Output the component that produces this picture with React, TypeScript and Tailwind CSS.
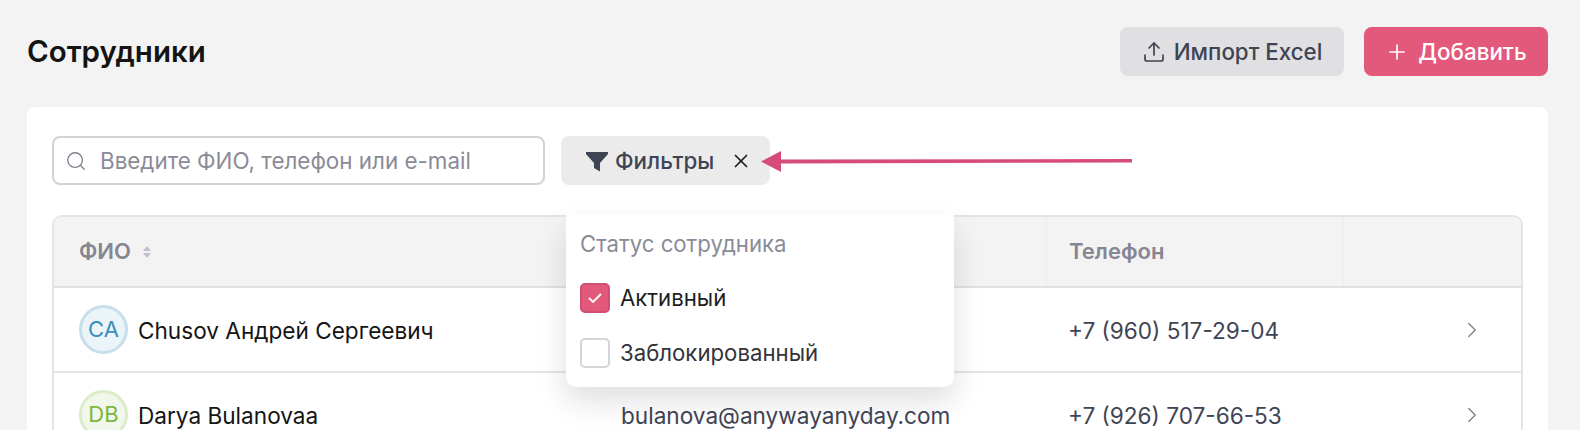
import { ChevronRight, Plus, Search, Upload, X } from "lucide-react";

const rows = [
  {
    initials: "CA",
    name: "Chusov Андрей Сергеевич",
    email: "",
    phone: "+7 (960) 517-29-04",
    avatar: "bg-[#ebf4f8] border-[#c6dfeb] text-[#3b8fb9]",
  },
  {
    initials: "DB",
    name: "Darya Bulanovaa",
    email: "bulanova@anywayanyday.com",
    phone: "+7 (926) 707-66-53",
    avatar: "bg-[#f2f7ec] border-[#dcebca] text-[#7db53c]",
  },
];

const columns = "grid grid-cols-[567px_424px_297px_1fr]";

function Checkbox({ checked }: { checked?: boolean }) {
  if (checked) {
    return (
      <span className="flex h-[30px] w-[30px] items-center justify-center rounded-[5px] border-2 border-[#cf4f70] bg-[#e3597b]">
        <svg width="16" height="12" viewBox="0 0 16 12" fill="none" stroke="white" strokeWidth="1.8">
          <path d="M2 6l4 4 8-8" />
        </svg>
      </span>
    );
  }
  return <span className="h-[30px] w-[30px] rounded-[5px] border-2 border-[#d4d4da] bg-white" />;
}

export default function App() {
  return (
    <div className="h-[430px] w-[1580px] overflow-hidden bg-[#f3f3f3] font-['Inter',sans-serif]">
      <header className="flex items-center justify-between pl-[27px] pr-[32px] pt-[27px]">
        <h1 className="text-[29.500px] font-semibold text-[#141414]">Сотрудники</h1>
        <div className="flex gap-5">
          <button className="flex h-[49px] w-[224px] items-center justify-center gap-[8px] rounded-lg bg-[#e0e0e3] text-[22.300px] font-[450] text-[#3f4454]">
            <Upload size={24} strokeWidth={1.7} />
            Импорт Excel
          </button>
          <button className="flex h-[49px] w-[184px] items-center justify-center gap-[9px] rounded-lg bg-[#e3597b] text-[22.400px] font-[450] text-white">
            <Plus size={24} strokeWidth={1.7} />
            Добавить
          </button>
        </div>
      </header>

      <main className="relative ml-[27px] mr-[32px] mt-[31px] h-[400px] rounded-t-lg bg-white px-[25px] pt-[29px]">
        <div className="flex gap-4">
          <div className="flex h-[49px] w-[493px] items-center gap-[13px] rounded-lg border-2 border-[#d2d2d8] bg-white pl-[11px]">
            <Search size={22} strokeWidth={1.5} className="text-[#82828e]" />
            <span className="text-[22.400px] text-[#8b8b97]">Введите ФИО, телефон или e-mail</span>
          </div>
          <button className="flex h-[49px] w-[209px] items-center gap-[6px] rounded-lg bg-[#ebebeb] pl-6 text-[22.400px] font-[450] text-[#3f4454]">
            <svg width="24" height="24" viewBox="0 0 24 24" fill="#3f4454">
              <path d="M1 3h22v2l-8 9v8.500l-6-3.500v-5L1 5z" />
            </svg>
            Фильтры
            <X size={22} strokeWidth={1.8} className="ml-[10px] text-[#1a1a1a]" />
          </button>
        </div>

        <div className="mt-[30px] rounded-t-[10px] border-2 border-b-0 border-[#e4e4e7]">
          <div className={`${columns} h-[71px] items-center rounded-t-[8px] border-b-2 border-[#e0e0e3] bg-[#f3f3f3] text-[22px] font-semibold text-[#868692]`}>
            <div className="flex items-center gap-[12px] pl-[25px]">
              ФИО
              <svg width="8" height="12" viewBox="0 0 8 12" fill="#c0c0cc">
                <path d="M4 0l4 5H0zM0 7h8l-4 5z" />
              </svg>
            </div>
            <div />
            <div className="flex h-full items-center border-l-2 border-[#efefef] pl-[22px]">Телефон</div>
            <div className="h-full border-l-2 border-[#efefef]" />
          </div>
          {rows.map((row) => (
            <div key={row.initials} className={`${columns} h-[85px] items-center border-b-2 border-[#e4e4e7] text-[22.600px]`}>
              <div className="flex items-center gap-[10px] pl-[25px] text-[#141414]">
                <span className={`flex h-[49px] w-[49px] items-center justify-center rounded-full border-[3px] text-[22px] ${row.avatar}`}>
                  {row.initials}
                </span>
                <span className="pt-[2px]">{row.name}</span>
              </div>
              <div className="pt-[2px] text-[#3f4454]">{row.email}</div>
              <div className="pl-[23px] pt-[2px] text-[#3f4454]">{row.phone}</div>
              <div className="flex justify-end pr-[36px]">
                <ChevronRight size={26} strokeWidth={1.3} className="text-[#82828e]" />
              </div>
            </div>
          ))}
        </div>

        {/* filter popup */}
        <div className="absolute left-[539px] top-[108px] h-[172px] w-[388px] rounded-b-[10px] bg-white px-[14px] pt-[14px] shadow-[0_14px_30px_rgba(30,30,50,0.14)]">
          <p className="text-[22.200px] leading-[30px] text-[#8b8b97]">Статус сотрудника</p>
          <label className="mt-[24px] flex items-center gap-[10px] text-[22.200px] leading-[30px] text-[#1e1e22]">
            <Checkbox checked />
            Активный
          </label>
          <label className="mt-[25px] flex items-center gap-[10px] text-[22.200px] leading-[30px] text-[#33333a]">
            <Checkbox />
            Заблокированный
          </label>
        </div>

        {/* arrow annotation */}
        <svg className="absolute left-[730px] top-[40px]" width="380" height="30" viewBox="0 0 380 30" fill="#d64a7c">
          <path d="M24 12.500L375 12v3.500L24 16.500z" />
          <path d="M4 14.500L24 4v21z" />
        </svg>
      </main>
    </div>
  );
}
